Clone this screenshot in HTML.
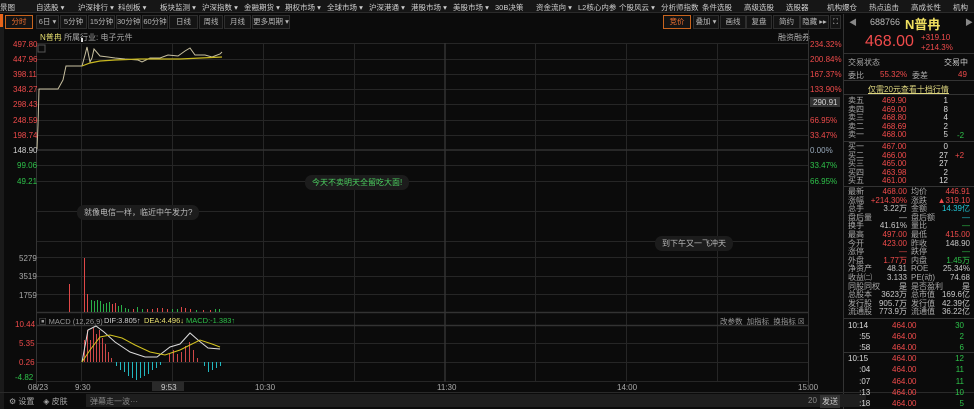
<!DOCTYPE html>
<html><head><meta charset="utf-8"><style>
*{margin:0;padding:0;box-sizing:border-box}
body{width:974px;height:409px;background:#0b0b0b;overflow:hidden;position:relative;font-family:"Liberation Sans","Noto Sans CJK SC",sans-serif;font-size:8px;color:#c8c8c8}
.a{position:absolute;white-space:nowrap}
.m{font-size:7.5px;top:2px}
.r{color:#f04b4b}.g{color:#2ec24a}.w{color:#d0d0d0}.y{color:#e8e070}.c{color:#22c8d8}
.btn{position:absolute;top:15px;height:14px;border:1px solid #2e2e2e;background:#141414;color:#b8b8b8;font-size:7.5px;line-height:12px;text-align:center;white-space:nowrap;overflow:hidden}
.rp div{position:absolute;white-space:nowrap;font-size:8px}
</style></head><body>
<div class="a" style="left:0;top:0;width:974px;height:13px;background:#161616;border-bottom:1px solid #2a2a2a"></div>
<div class="a w m" style="left:0">景图</div>
<div class="a w m" style="left:36px">自选股 ▾</div><div class="a w m" style="left:78px">沪深排行 ▾</div><div class="a w m" style="left:118px">科创板 ▾</div><div class="a w m" style="left:160px">板块监测 ▾</div><div class="a w m" style="left:202px">沪深指数 ▾</div><div class="a w m" style="left:244px">金融期货 ▾</div><div class="a w m" style="left:285px">期权市场 ▾</div><div class="a w m" style="left:327px">全球市场 ▾</div><div class="a w m" style="left:369px">沪深港通 ▾</div><div class="a w m" style="left:411px">港股市场 ▾</div><div class="a w m" style="left:453px">美股市场 ▾</div><div class="a w m" style="left:495px">30B决策</div><div class="a w m" style="left:536px">资金流向 ▾</div><div class="a w m" style="left:578px">L2核心内参</div><div class="a w m" style="left:619px">个股风云 ▾</div><div class="a w m" style="left:661px">分析师指数</div><div class="a w m" style="left:702px">条件选股</div><div class="a w m" style="left:744px">高级选股</div><div class="a w m" style="left:786px">选股器</div><div class="a w m" style="left:827px">机构爆仓</div><div class="a w m" style="left:869px">热点追击</div><div class="a w m" style="left:911px">高成长性</div><div class="a w m" style="left:953px">机构</div>
<div class="a" style="left:0;top:14px;width:4px;height:395px;background:#1a1a1a"></div>
<div class="a" style="left:0;top:14px;width:3px;height:13px;background:#e8641a"></div>
<div class="btn" style="left:5px;width:28px;border-color:#c8641e;color:#f07030">分时</div>
<div class="btn" style="left:36px;width:23px">6日 ▾</div><div class="btn" style="left:60px;width:27px">5分钟</div><div class="btn" style="left:88px;width:27px">15分钟</div><div class="btn" style="left:116px;width:25px">30分钟</div><div class="btn" style="left:142px;width:26px">60分钟</div><div class="btn" style="left:169px;width:29px">日线</div><div class="btn" style="left:199px;width:24px">周线</div><div class="btn" style="left:224px;width:27px">月线</div><div class="btn" style="left:252px;width:38px">更多周期 ▾</div>
<div class="btn" style="left:663px;width:28px;border-color:#c8641e;color:#f07030">竞价</div><div class="btn" style="left:693px;width:26px">叠加 ▾</div><div class="btn" style="left:720px;width:26px">画线</div><div class="btn" style="left:746px;width:26px">复盘</div><div class="btn" style="left:773px;width:27px">简约</div><div class="btn" style="left:800px;width:29px">隐藏 ▸▸</div><div class="btn" style="left:830px;width:11px">⛶</div>
<div class="a y" style="left:40px;top:32px">N普冉</div><div class="a" style="left:64px;top:32px;color:#a8a8a8">所属行业: 电子元件</div>
<div class="a" style="left:778px;top:32px;color:#a8a8a8">融资融券</div>
<svg class="a" style="left:0;top:0" width="974" height="409">
<g stroke="#262626" stroke-width="1">
<line x1="36" y1="43.5" x2="808" y2="43.5"/><line x1="36" y1="59.5" x2="808" y2="59.5"/><line x1="36" y1="74.5" x2="808" y2="74.5"/><line x1="36" y1="89.5" x2="808" y2="89.5"/><line x1="36" y1="104.5" x2="808" y2="104.5"/><line x1="36" y1="120.5" x2="808" y2="120.5"/><line x1="36" y1="135.5" x2="808" y2="135.5"/><line x1="36" y1="165.5" x2="808" y2="165.5"/><line x1="36" y1="181.5" x2="808" y2="181.5"/><line x1="36" y1="211.5" x2="808" y2="211.5"/><line x1="36" y1="241.5" x2="808" y2="241.5"/><line x1="36" y1="257.5" x2="808" y2="257.5"/><line x1="36" y1="276.5" x2="808" y2="276.5"/><line x1="36" y1="294.5" x2="808" y2="294.5"/><line x1="36" y1="343.5" x2="808" y2="343.5"/><line x1="36" y1="362.5" x2="808" y2="362.5"/><line x1="36" y1="381.5" x2="808" y2="381.5"/>
<line x1="81.5" y1="43" x2="81.5" y2="382"/><line x1="172.5" y1="43" x2="172.5" y2="382"/><line x1="263.5" y1="43" x2="263.5" y2="382"/><line x1="354.5" y1="43" x2="354.5" y2="382"/><line x1="535.5" y1="43" x2="535.5" y2="382"/><line x1="626.5" y1="43" x2="626.5" y2="382"/><line x1="717.5" y1="43" x2="717.5" y2="382"/>
</g>
<g stroke="#333" stroke-width="1.5"><line x1="36" y1="150" x2="808" y2="150"/><line x1="445" y1="43" x2="445" y2="382"/><line x1="36" y1="312.5" x2="808" y2="312.5"/><line x1="36" y1="325.5" x2="808" y2="325.5"/></g>
<line x1="808.5" y1="30" x2="808.5" y2="390" stroke="#333"/><line x1="36.5" y1="43" x2="36.5" y2="390" stroke="#333"/><line x1="843.5" y1="14" x2="843.5" y2="409" stroke="#333"/>
<polyline fill="none" stroke="#c8c0a0" stroke-width="1" points="37,149 38,125 39,89 58,89 63,80 66,66 82,66 85,55 87,47 90,62 92,58 94,49 100,56 108,57 115,58 125,59 138,60 142,62 150,58 160,58 168,55 178,56 185,51 190,48 195,55 205,55 212,57 220,54 222,52"/>
<polyline fill="none" stroke="#c8b820" stroke-width="1.2" points="82,66 90,63 100,61 115,60 140,59 180,59 222,57"/>
<rect x="81" y="38" width="2" height="4" fill="#ddd"/>
<g stroke-width="1">
<line x1="69.5" y1="284" x2="69.5" y2="312" stroke="#e04848"/><line x1="84.5" y1="258" x2="84.5" y2="312" stroke="#e04848"/><line x1="87.5" y1="294" x2="87.5" y2="312" stroke="#e04848"/>
<line x1="91.5" y1="300" x2="91.5" y2="312" stroke="#2ab048"/><line x1="94.5" y1="301" x2="94.5" y2="312" stroke="#2ab048"/><line x1="97.5" y1="300" x2="97.5" y2="312" stroke="#2ab048"/><line x1="100.5" y1="301" x2="100.5" y2="312" stroke="#2ab048"/><line x1="103.5" y1="304" x2="103.5" y2="312" stroke="#2ab048"/><line x1="106.5" y1="303" x2="106.5" y2="312" stroke="#2ab048"/><line x1="109.5" y1="302" x2="109.5" y2="312" stroke="#2ab048"/><line x1="112.5" y1="304" x2="112.5" y2="312" stroke="#e04848"/><line x1="115.5" y1="303" x2="115.5" y2="312" stroke="#e04848"/><line x1="118.5" y1="306" x2="118.5" y2="312" stroke="#2ab048"/><line x1="121.5" y1="305" x2="121.5" y2="312" stroke="#2ab048"/><line x1="125.5" y1="308" x2="125.5" y2="312" stroke="#2ab048"/><line x1="128.5" y1="309" x2="128.5" y2="312" stroke="#2ab048"/><line x1="133.5" y1="309" x2="133.5" y2="312" stroke="#e04848"/><line x1="137.5" y1="307" x2="137.5" y2="312" stroke="#2ab048"/><line x1="142.5" y1="309" x2="142.5" y2="312" stroke="#2ab048"/><line x1="147.5" y1="309" x2="147.5" y2="312" stroke="#e04848"/><line x1="152.5" y1="309" x2="152.5" y2="312" stroke="#e04848"/><line x1="157.5" y1="308" x2="157.5" y2="312" stroke="#e04848"/><line x1="162.5" y1="308" x2="162.5" y2="312" stroke="#e04848"/><line x1="167.5" y1="309" x2="167.5" y2="312" stroke="#e04848"/><line x1="172.5" y1="309" x2="172.5" y2="312" stroke="#2ab048"/><line x1="177.5" y1="309" x2="177.5" y2="312" stroke="#2ab048"/><line x1="181.5" y1="307" x2="181.5" y2="312" stroke="#e04848"/><line x1="185.5" y1="308" x2="185.5" y2="312" stroke="#e04848"/><line x1="190.5" y1="309" x2="190.5" y2="312" stroke="#e04848"/><line x1="196.5" y1="310" x2="196.5" y2="312" stroke="#2ab048"/><line x1="203.5" y1="310" x2="203.5" y2="312" stroke="#e04848"/><line x1="210.5" y1="310" x2="210.5" y2="312" stroke="#e04848"/><line x1="215.5" y1="309" x2="215.5" y2="312" stroke="#2ab048"/><line x1="219.5" y1="309" x2="219.5" y2="312" stroke="#2ab048"/>
</g>
<g stroke="#d04848"><line x1="84.5" y1="362" x2="84.5" y2="340"/><line x1="87.5" y1="362" x2="87.5" y2="330"/><line x1="90.5" y1="362" x2="90.5" y2="340"/><line x1="93.5" y1="362" x2="93.5" y2="328"/><line x1="96.5" y1="362" x2="96.5" y2="334"/><line x1="99.5" y1="362" x2="99.5" y2="330"/><line x1="102.5" y1="362" x2="102.5" y2="338"/><line x1="105.5" y1="362" x2="105.5" y2="344"/><line x1="108.5" y1="362" x2="108.5" y2="352"/><line x1="111.5" y1="362" x2="111.5" y2="358"/><line x1="169.5" y1="362" x2="169.5" y2="354"/><line x1="173.5" y1="362" x2="173.5" y2="350"/><line x1="177.5" y1="362" x2="177.5" y2="354"/><line x1="181.5" y1="362" x2="181.5" y2="352"/><line x1="185.5" y1="362" x2="185.5" y2="346"/><line x1="189.5" y1="362" x2="189.5" y2="342"/><line x1="193.5" y1="362" x2="193.5" y2="350"/><line x1="197.5" y1="362" x2="197.5" y2="358"/></g>
<g stroke="#22b8c0"><line x1="116.5" y1="362" x2="116.5" y2="366"/><line x1="120.5" y1="362" x2="120.5" y2="370"/><line x1="124.5" y1="362" x2="124.5" y2="372"/><line x1="128.5" y1="362" x2="128.5" y2="376"/><line x1="132.5" y1="362" x2="132.5" y2="378"/><line x1="136.5" y1="362" x2="136.5" y2="380"/><line x1="140.5" y1="362" x2="140.5" y2="378"/><line x1="144.5" y1="362" x2="144.5" y2="376"/><line x1="148.5" y1="362" x2="148.5" y2="374"/><line x1="152.5" y1="362" x2="152.5" y2="370"/><line x1="156.5" y1="362" x2="156.5" y2="368"/><line x1="160.5" y1="362" x2="160.5" y2="365"/><line x1="204.5" y1="362" x2="204.5" y2="366"/><line x1="208.5" y1="362" x2="208.5" y2="372"/><line x1="212.5" y1="362" x2="212.5" y2="370"/><line x1="216.5" y1="362" x2="216.5" y2="368"/><line x1="220.5" y1="362" x2="220.5" y2="366"/></g>
<polyline fill="none" stroke="#ddd" points="82,362 88,330 96,326 104,332 115,342 130,352 145,357 157,357 170,347 180,344 190,333 198,340 208,348 220,349"/>
<polyline fill="none" stroke="#d4c420" points="82,362 90,350 100,337 110,335 122,338 135,345 150,352 165,355 180,350 200,340 212,344 220,347"/>
<rect x="38" y="45" width="7" height="7" fill="none" stroke="#555"/>
<rect x="810" y="97" width="30" height="10" fill="#333"/>
<rect x="0" y="392" width="974" height="1" fill="#2a2a2a"/>
<rect x="86" y="394" width="780" height="13" fill="#1e1e1e"/>
<rect x="152" y="382" width="32" height="9" fill="#2a2a2a"/>
</svg>
<div class="a r" style="left:13px;top:40px">497.80</div><div class="a r" style="left:13px;top:55px">447.96</div><div class="a r" style="left:13px;top:70px">398.11</div><div class="a r" style="left:13px;top:85px">348.27</div><div class="a r" style="left:13px;top:100px">298.43</div><div class="a r" style="left:13px;top:116px">248.59</div><div class="a r" style="left:13px;top:131px">198.74</div><div class="a w" style="left:13px;top:146px">148.90</div><div class="a g" style="left:17px;top:161px">99.06</div><div class="a g" style="left:17px;top:177px">49.21</div>
<div class="a" style="left:19px;top:254px;color:#aaa">5279</div><div class="a" style="left:19px;top:272px;color:#aaa">3519</div><div class="a" style="left:19px;top:291px;color:#aaa">1759</div>
<div class="a r" style="left:15px;top:320px">10.44</div><div class="a r" style="left:19px;top:339px">5.35</div><div class="a r" style="left:19px;top:358px">0.26</div><div class="a g" style="left:15px;top:373px">-4.82</div>
<div class="a r" style="left:810px;top:40px">234.32%</div><div class="a r" style="left:810px;top:55px">200.84%</div><div class="a r" style="left:810px;top:70px">167.37%</div><div class="a r" style="left:810px;top:85px">133.90%</div><div class="a w" style="left:813px;top:98px">290.91</div><div class="a r" style="left:810px;top:116px">66.95%</div><div class="a r" style="left:810px;top:131px">33.47%</div><div class="a" style="left:810px;top:146px;color:#9ab">0.00%</div><div class="a g" style="left:810px;top:161px">33.47%</div><div class="a g" style="left:810px;top:177px">66.95%</div>
<div class="a" style="left:39px;top:316px;color:#999;font-size:7.5px">▣ MACD (12,26,9)</div><div class="a w" style="left:104px;top:316px;font-size:7.5px">DIF:3.805↑</div><div class="a y" style="left:144px;top:316px;font-size:7.5px">DEA:4.496↓</div><div class="a g" style="left:186px;top:316px;font-size:7.5px">MACD:-1.383↑</div>
<div class="a" style="left:720px;top:316px;color:#999;font-size:7.5px">改参数 &nbsp;加指标 &nbsp;换指标 ☒</div>
<div class="a" style="left:28px;top:383px;color:#aaa">08/23</div><div class="a" style="left:75px;top:383px;color:#aaa">9:30</div><div class="a" style="left:161px;top:383px;color:#ccc">9:53</div><div class="a" style="left:255px;top:383px;color:#aaa">10:30</div><div class="a" style="left:437px;top:383px;color:#aaa">11:30</div><div class="a" style="left:617px;top:383px;color:#aaa">14:00</div><div class="a" style="left:798px;top:383px;color:#aaa">15:00</div>
<div class="a" style="left:9px;top:396px;color:#aaa">⚙ 设置 &nbsp;&nbsp; ◈ 皮肤</div><div class="a" style="left:90px;top:396px;color:#888">弹幕走一波···</div><div class="a" style="left:808px;top:396px;color:#888">20</div><div class="a" style="left:820px;top:395px;background:#333;color:#ccc;padding:1px 2px">发送</div>
<div class="a" style="left:305px;top:175px;background:#1c1c1c;border-radius:7px;padding:2px 7px;color:#4cd060">今天不卖明天全留吃大面!</div>
<div class="a" style="left:77px;top:205px;background:#1c1c1c;border-radius:7px;padding:2px 7px;color:#bbb">就像电信一样，临近中午发力?</div>
<div class="a" style="left:655px;top:236px;background:#1c1c1c;border-radius:7px;padding:2px 7px;color:#bbb">到下午又一飞冲天</div>
<div class="rp">
<div style="left:849px;top:17px;color:#888">◀</div><div style="left:965px;top:17px;color:#888">▶</div>
<div style="left:870px;top:17px;color:#bbb;font-size:9px">688766</div><div style="left:905px;top:14px;color:#f0e060;font-size:13px;font-weight:bold">N普冉</div>
<div style="left:865px;top:33px;color:#f04b4b;font-size:16px">468.00</div>
<div style="left:921px;top:33px;color:#f04b4b">+319.10</div><div style="left:921px;top:43px;color:#f04b4b">+214.3%</div>
<div style="left:848px;top:57px;color:#aaa">交易状态</div><div style="left:944px;top:57px;color:#ccc">交易中</div>
<div style="left:848px;top:70px;color:#aaa">委比</div><div style="left:880px;top:70px" class="r">55.32%</div><div style="left:912px;top:70px;color:#aaa">委差</div><div style="left:958px;top:70px" class="r">49</div>
<div style="left:868px;top:84px;color:#e0d880;text-decoration:underline">仅需20元查看十档行情</div>
<div style="left:848px;top:97px;color:#aaa;line-height:8.6px">卖五<br>卖四<br>卖三<br>卖二<br>卖一</div>
<div style="left:882px;top:97px;line-height:8.6px" class="r">469.90<br>469.00<br>468.80<br>468.69<br>468.00</div>
<div style="left:934px;top:97px;line-height:8.6px;color:#ddd;text-align:right;width:14px">1<br>8<br>4<br>2<br>5</div>
<div style="left:957px;top:131px" class="g">-2</div>
<div style="left:848px;top:143px;color:#aaa;line-height:8.6px">买一<br>买二<br>买三<br>买四<br>买五</div>
<div style="left:882px;top:143px;line-height:8.6px" class="r">467.00<br>466.00<br>465.00<br>463.98<br>461.00</div>
<div style="left:930px;top:143px;line-height:8.6px;color:#ddd;text-align:right;width:18px">0<br>27<br>27<br>2<br>12</div>
<div style="left:955px;top:151px" class="r">+2</div>
<div style="left:848px;top:188px;color:#aaa;line-height:8.6px">最新<br>涨幅<br>总手<br>盘后量<br>换手<br>最高<br>今开<br>涨停<br>外盘<br>净资产<br>收益㈡<br>同股同权<br>总股本<br>发行股<br>流通股</div>
<div style="left:867px;top:188px;line-height:8.6px;text-align:right;width:40px"><span class="r">468.00</span><br><span class="r">+214.30%</span><br>3.22万<br>—<br>41.61%<br><span class="r">497.00</span><br><span class="r">423.00</span><br><span class="r">—</span><br><span class="r">1.77万</span><br>48.31<br>3.133<br>是<br>3623万<br>905.7万<br>773.9万</div>
<div style="left:911px;top:188px;color:#aaa;line-height:8.6px">均价<br>涨跌<br>金额<br>盘后额<br>量比<br>最低<br>昨收<br>跌停<br>内盘<br>ROE<br>PE(动)<br>是否盈利<br>总市值<br>发行值<br>流通值</div>
<div style="left:930px;top:188px;line-height:8.6px;text-align:right;width:40px"><span class="r">446.91</span><br><span class="r">▲319.10</span><br><span class="c">14.39亿</span><br><span class="c">—</span><br><span class="g">—</span><br><span class="r">415.00</span><br>148.90<br><span class="g">—</span><br><span class="g">1.45万</span><br>25.34%<br>74.68<br>是<br>169.6亿<br>42.39亿<br>36.22亿</div>
<div style="left:848px;top:320px;color:#ddd;line-height:11px">10:14<br>&nbsp;&nbsp;&nbsp;&nbsp;&nbsp;:55<br>&nbsp;&nbsp;&nbsp;&nbsp;&nbsp;:58</div>
<div style="left:892px;top:320px;line-height:11px" class="r">464.00<br>464.00<br>464.00</div>
<div style="left:950px;top:320px;line-height:11px;text-align:right;width:14px" class="g">30<br>2<br>6</div>
<div style="left:848px;top:353px;color:#ddd;line-height:11.3px">10:15<br>&nbsp;&nbsp;&nbsp;&nbsp;&nbsp;:04<br>&nbsp;&nbsp;&nbsp;&nbsp;&nbsp;:07<br>&nbsp;&nbsp;&nbsp;&nbsp;&nbsp;:13<br>&nbsp;&nbsp;&nbsp;&nbsp;&nbsp;:18</div>
<div style="left:892px;top:353px;line-height:11.3px" class="r">464.00<br>464.00<br>464.00<br>464.00<br>464.00</div>
<div style="left:950px;top:353px;line-height:11.3px;text-align:right;width:14px" class="g">12<br>11<br>11<br>10<br>5</div>
</div>
<svg class="a" style="left:844px;top:0" width="130" height="409"><g stroke="#333"><line x1="0" y1="53.5" x2="130" y2="53.5"/><line x1="0" y1="80.5" x2="130" y2="80.5"/><line x1="0" y1="94.5" x2="130" y2="94.5"/><line x1="0" y1="141.5" x2="130" y2="141.5"/><line x1="0" y1="186.5" x2="130" y2="186.5"/><line x1="0" y1="318.5" x2="130" y2="318.5"/><line x1="0" y1="352.5" x2="130" y2="352.5"/></g></svg>
</body></html>
